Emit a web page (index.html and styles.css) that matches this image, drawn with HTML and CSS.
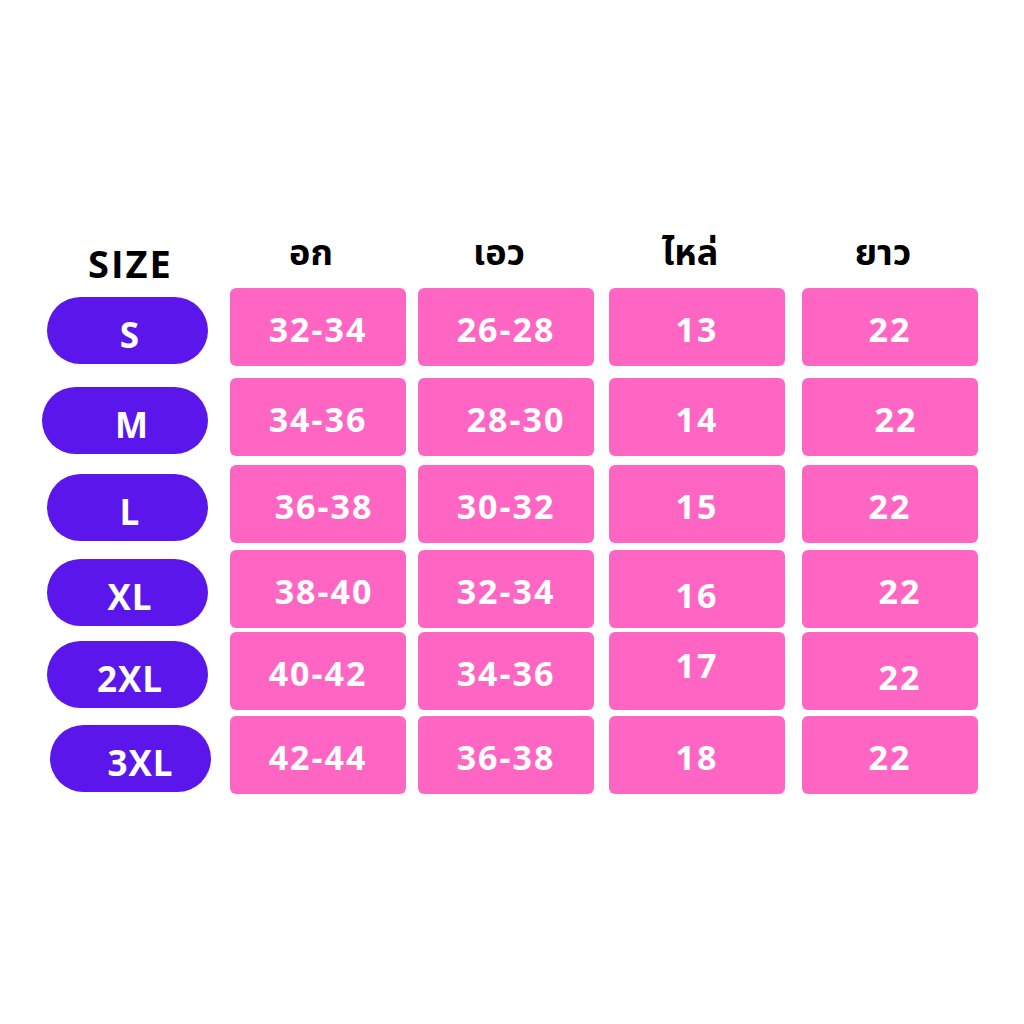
FILE: index.html
```html
<!DOCTYPE html>
<html lang="th">
<head>
<meta charset="utf-8">
<title>Size chart</title>
<link rel="stylesheet" href="styles.css">
</head>
<body>
<div class="chart">
  <div class="head head-size">SIZE</div>
  <div class="head">อก</div>
  <div class="head">เอว</div>
  <div class="head">ไหล่</div>
  <div class="head">ยาว</div>

  <div class="pill">S</div>
  <div class="cell">32-34</div>
  <div class="cell">26-28</div>
  <div class="cell">13</div>
  <div class="cell">22</div>

  <div class="pill pill-wide">M</div>
  <div class="cell">34-36</div>
  <div class="cell shift-r">28-30</div>
  <div class="cell">14</div>
  <div class="cell shift-r-sm">22</div>

  <div class="pill">L</div>
  <div class="cell shift-r-sm">36-38</div>
  <div class="cell">30-32</div>
  <div class="cell">15</div>
  <div class="cell">22</div>

  <div class="pill">XL</div>
  <div class="cell shift-r-sm">38-40</div>
  <div class="cell">32-34</div>
  <div class="cell shift-down">16</div>
  <div class="cell shift-r">22</div>

  <div class="pill">2XL</div>
  <div class="cell">40-42</div>
  <div class="cell">34-36</div>
  <div class="cell shift-up">17</div>
  <div class="cell shift-r shift-down">22</div>

  <div class="pill pill-3xl">3XL</div>
  <div class="cell">42-44</div>
  <div class="cell">36-38</div>
  <div class="cell">18</div>
  <div class="cell">22</div>
</div>
</body>
</html>
```
FILE: styles.css
```css
html, body {
  margin: 0;
  padding: 0;
  background: #ffffff;
}

body {
  width: 1024px;
  height: 1024px;
  font-family: "Open Sans", "Noto Sans Thai", "Noto Sans", sans-serif;
}

.chart {
  display: grid;
  grid-template-columns: 183px 188px 191px 193px 176px;
  grid-template-rows: 60px 90px 87px 85px 82px 84px 78px;
  padding: 228px 0 0 47px;
}

.head {
  align-self: end;
  justify-self: start;
  width: 176px;
  padding-right: 14px;
  box-sizing: border-box;
  text-align: center;
  font-size: 36px;
  font-weight: 700;
  line-height: 44px;
  color: #000;
  margin-bottom: 14px;
}

.head-size {
  width: 161px;
  padding-right: 0;
  padding-left: 6px;
  font-size: 38px;
  line-height: 38px;
  letter-spacing: 2px;
  margin-bottom: 6px;
}

.pill {
  width: 161px;
  height: 67px;
  margin-top: 9px;
  border-radius: 34px;
  background: #5b17eb;
  color: #fff;
  font-size: 35px;
  font-weight: 700;
  letter-spacing: 1px;
  display: flex;
  align-items: center;
  justify-content: center;
  padding-top: 8px;
  padding-left: 5px;
  box-sizing: border-box;
}

.pill-wide {
  width: 166px;
  margin-left: -5px;
  padding-left: 14px;
}

.pill-3xl {
  margin-left: 3px;
  padding-left: 20px;
}

.cell {
  width: 176px;
  height: 78px;
  border-radius: 6px;
  background: #ff66c4;
  color: #ffffff;
  font-size: 34px;
  font-weight: 700;
  letter-spacing: 2px;
  display: flex;
  align-items: center;
  justify-content: center;
  padding-top: 3px;
  box-sizing: border-box;
}

.shift-r {
  padding-left: 20px;
}

.shift-r-sm {
  padding-left: 12px;
}

.shift-down {
  padding-top: 12px;
}

.shift-up {
  padding-top: 0;
  padding-bottom: 12px;
}
```
